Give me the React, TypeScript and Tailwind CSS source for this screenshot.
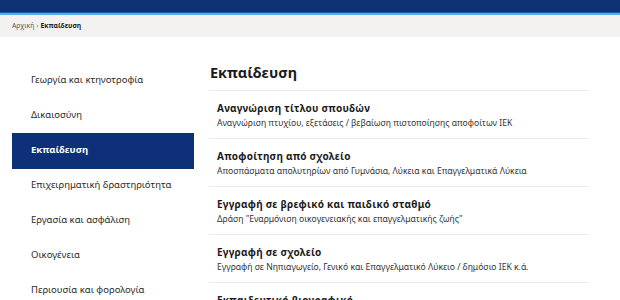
const sections = [
  "Γεωργία και κτηνοτροφία",
  "Δικαιοσύνη",
  "Εκπαίδευση",
  "Επιχειρηματική δραστηριότητα",
  "Εργασία και ασφάλιση",
  "Οικογένεια",
  "Περιουσία και φορολογία",
];

const services = [
  {
    title: "Αναγνώριση τίτλου σπουδών",
    desc: "Αναγνώριση πτυχίου, εξετάσεις / βεβαίωση πιστοποίησης αποφοίτων ΙΕΚ",
  },
  {
    title: "Αποφοίτηση από σχολείο",
    desc: "Αποσπάσματα απολυτηρίων από Γυμνάσια, Λύκεια και Επαγγελματικά Λύκεια",
  },
  {
    title: "Εγγραφή σε βρεφικό και παιδικό σταθμό",
    desc: "Δράση \"Εναρμόνιση οικογενειακής και επαγγελματικής ζωής\"",
  },
  {
    title: "Εγγραφή σε σχολείο",
    desc: "Εγγραφή σε Νηπιαγωγείο, Γενικό και Επαγγελματικό Λύκειο / δημόσιο ΙΕΚ κ.ά.",
  },
  {
    title: "Εκπαιδευτικό βιογραφικό",
    desc: "",
  },
];

export default function App() {
  return (
    <div className="w-[620px] h-[300px] overflow-hidden bg-white font-['Noto_Sans',sans-serif] text-[#1b1b1b]">
      <header className="h-[12px] bg-[#0f3274]" />
      <div className="h-[3px] bg-[#5aaee2] border-t border-[#1c5aa6]" />
      <nav className="h-[22px] bg-[#f3f2f1] flex items-center px-[12px] text-[6.8px] gap-[2px]">
        <span className="text-[#555]">Αρχική</span>
        <span className="text-[#777]">›</span>
        <span className="font-bold">Εκπαίδευση</span>
      </nav>
      <main className="flex gap-[15px] pl-[12px] pr-[31px]">
        <aside className="w-[182px] shrink-0 flex flex-col pt-[26px]">
          {sections.map((s) => {
            const active = s === "Εκπαίδευση";
            return (
              <div
                key={s}
                className={
                  active
                    ? "h-[36px] -my-[0.5px] flex items-center pl-[19px] text-[9.5px] font-bold text-white bg-[#0e3079]"
                    : "h-[35px] flex items-center pl-[19px] text-[9.5px] text-[#2b2b2b]"
                }
              >
                {s}
              </div>
            );
          })}
        </aside>
        <section className="flex-1 pt-[26px]">
          <h1 className="text-[14.5px] font-bold leading-[18px] pl-[1px] mb-[9px]">Εκπαίδευση</h1>
          <ul className="border-t border-[#ececec]">
            {services.map((s) => (
              <li key={s.title} className="border-b border-[#ececec] pl-[8px] pt-[10px] pb-[9px] h-[48px]">
                <div className="text-[10px] font-bold leading-[14px] tracking-[0.25px]">{s.title}</div>
                <div className="text-[8.6px] leading-[12px] mt-[2px] text-[#333]">{s.desc}</div>
              </li>
            ))}
          </ul>
        </section>
      </main>
    </div>
  );
}
